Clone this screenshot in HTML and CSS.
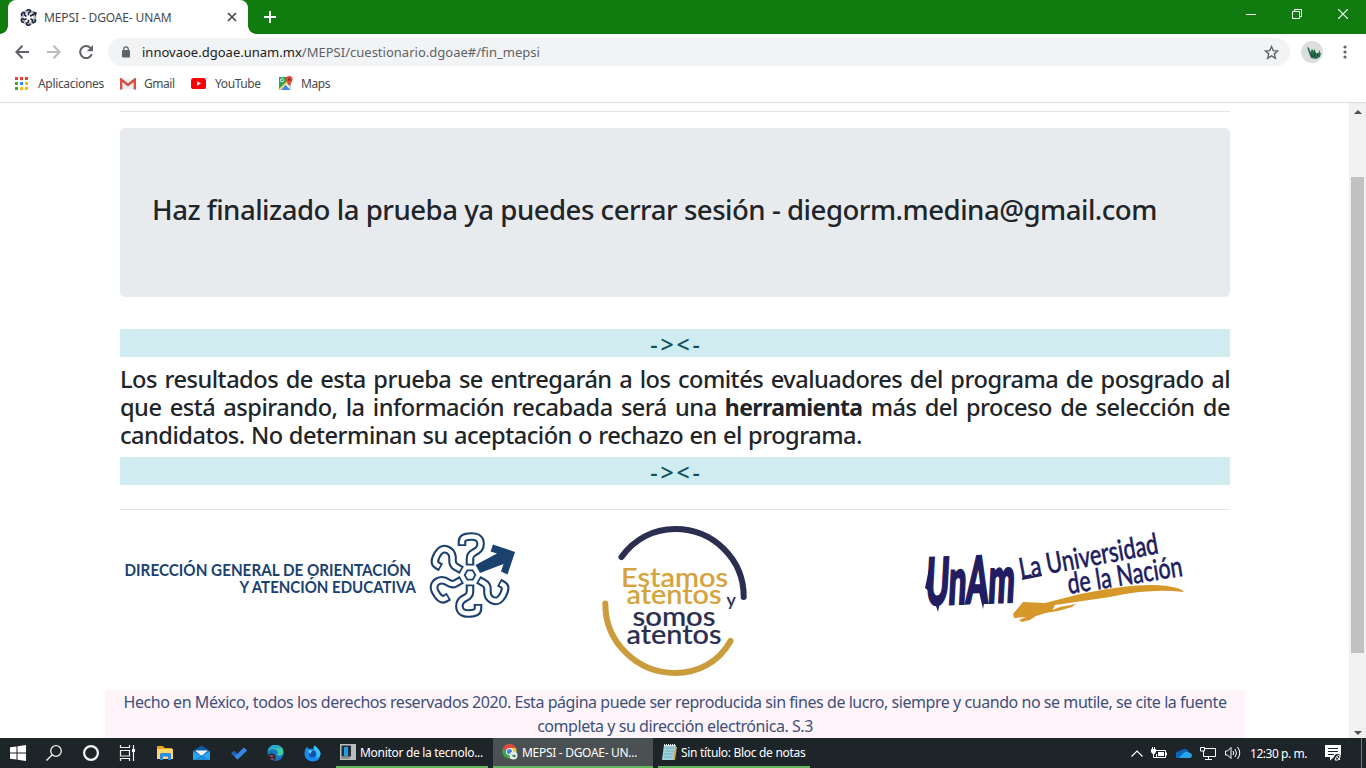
FILE: index.html
```html
<!DOCTYPE html>
<html lang="es">
<head>
<meta charset="utf-8">
<title>MEPSI - DGOAE- UNAM</title>
<link rel="stylesheet" href="styles.css">
</head>
<body>
<div class="screen">
  <header class="tabstrip">
    <div class="tab">
      <svg class="favicon" width="17" height="17" viewBox="0 0 90 90"><g fill="none" stroke="#1d2740" stroke-width="9"><g id="fq"><path d="M45 33V26Q45 21 49 19Q56 16 56 11Q55 4 45 4Q37 4 37 12"/></g><use href="#fq" transform="rotate(-60 45 45)"/><use href="#fq" transform="rotate(-120 45 45)"/><use href="#fq" transform="rotate(180 45 45)"/><use href="#fq" transform="rotate(120 45 45)"/></g><circle cx="45" cy="45" r="34" fill="none" stroke="#1d2740" stroke-opacity=".3" stroke-width="16"/><path d="M51 33L74 22L66 12L90 18L82 42L78 30L55 42Z" fill="#1d2740"/></svg>
      <span class="tab-title">MEPSI - DGOAE- UNAM</span>
      <svg class="tab-close" width="10" height="10" viewBox="0 0 10 10"><path d="M1 1L9 9M9 1L1 9" stroke="#45494d" stroke-width="1.7"/></svg>
    </div>
    <svg class="newtab" width="12" height="12" viewBox="0 0 12 12"><path d="M6 0V12M0 6H12" stroke="#fff" stroke-width="2"/></svg>
    <div class="window-controls">
      <svg width="10" height="10"><path d="M0 5.5H10" stroke="#fff"/></svg>
      <svg width="10" height="10"><path d="M.5 2.5H7.5V9.5H.5ZM2.5 2.5V.5H9.5V7.5H7.5" fill="none" stroke="#fff"/></svg>
      <svg width="10" height="10"><path d="M0 0L10 10M10 0L0 10" stroke="#fff" stroke-width="1.2"/></svg>
    </div>
  </header>
  <nav class="toolbar">
    <svg class="nav-back" width="14" height="14" viewBox="0 0 14 14"><path d="M14 7H1.5M7.5 .8L1.3 7L7.5 13.2" fill="none" stroke="#5f6368" stroke-width="2"/></svg>
    <svg class="nav-forward" width="14" height="14" viewBox="0 0 14 14"><path d="M0 7H12.5M6.5 .8L12.7 7L6.5 13.2" fill="none" stroke="#babcbe" stroke-width="2"/></svg>
    <svg class="nav-reload" width="14" height="14" viewBox="0 0 14 14"><path d="M12.8 9.2A6 6 0 1 1 11.5 2.9L12.3 3.8" fill="none" stroke="#5f6368" stroke-width="2"/><path d="M14 0V6.2H7.8Z" fill="#5f6368"/></svg>
    <div class="omnibox">
      <svg width="8" height="12" viewBox="0 0 8 12"><rect y="4" width="8" height="7.5" rx="1" fill="#5f6368"/><path d="M1.8 4.5V3A2.2 2.2 0 0 1 6.2 3V4.5" fill="none" stroke="#5f6368" stroke-width="1.2"/></svg>
      <span class="url">innovaoe.dgoae.unam.mx<span class="url-path">/MEPSI/cuestionario.dgoae#/fin_mepsi</span></span>
      <svg class="star" width="15" height="15" viewBox="0 0 24 24"><path d="M12 2.5L14.8 9L22 9.6L16.5 14.2L18.2 21.2L12 17.4L5.8 21.2L7.5 14.2L2 9.6L9.2 9Z" fill="none" stroke="#5f6368" stroke-width="2.2"/></svg>
    </div>
    <svg class="avatar" width="22" height="22" viewBox="0 0 22 22"><circle cx="11" cy="11" r="11" fill="#dcdedd"/><path d="M6 6L8 7L9.500 11L11 8L12.500 10L13.500 8L15 12L17 13L18.500 9L19 12L20 12L19 16L15 18L10 17L8 12Z" fill="#28704f"/><path d="M13 12L14 16M10 13L12 16M16 12L17 15" stroke="#15442f" stroke-width="1"/></svg>
    <svg class="kebab" width="4" height="14" viewBox="0 0 4 14"><g fill="#5f6368"><circle cx="2" cy="2" r="1.6"/><circle cx="2" cy="7" r="1.6"/><circle cx="2" cy="12" r="1.6"/></g></svg>
  </nav>
  <nav class="bookmarks">
    <span class="bookmark apps"><svg width="13" height="13" viewBox="0 0 13 13"><path d="M0 0h3v3H0zM5 0h3v3H5zM10 0h3v3h-3z" fill="#ea4335"/><path d="M0 5h3v3H0zM0 10h3v3H0z" fill="#34a853"/><path d="M5 5h3v3H5z" fill="#4285f4"/><path d="M10 5h3v3h-3zM5 10h3v3H5zM10 10h3v3h-3z" fill="#fbbc05"/></svg><span>Aplicaciones</span></span>
    <span class="bookmark gmail"><svg width="16" height="12" viewBox="0 0 16 12"><path d="M0 1H16V11.5H0Z" fill="#f0f0f0"/><path d="M1.2 11.5V1.5L8 7L14.8 1.5V11.5" fill="none" stroke="#d94b3e" stroke-width="2.3"/></svg><span>Gmail</span></span>
    <span class="bookmark youtube"><svg width="15" height="11" viewBox="0 0 15 11"><rect width="15" height="11" rx="2.6" fill="#f00"/><path d="M6 3.2L10 5.5L6 7.8Z" fill="#fff"/></svg><span>YouTube</span></span>
    <span class="bookmark maps"><svg width="15" height="15" viewBox="0 0 15 15"><path d="M1 1H13V14H1Z" fill="#2ba45b"/><path d="M1 14L12 3L13 14Z" fill="#e6e6e6"/><path d="M3 14L7.5 9L12.5 14Z" fill="#4285f4"/><path d="M1 14L13 2" stroke="#ffd04b" stroke-width="1.6"/><circle cx="4" cy="4.2" r="1.6" fill="none" stroke="#d7f0df"/><path d="M11.2 10Q7.9 5.5 7.9 3.3A3.3 3.3 0 0 1 14.5 3.3Q14.5 5.5 11.2 10Z" fill="#df4a3d"/><circle cx="11.2" cy="3.4" r="1.2" fill="#7f2a22"/></svg><span>Maps</span></span>
  </nav>
  <div class="viewport">
    <main class="page">
      <div class="container">
        <hr class="rule">
        <section class="jumbotron"><h3 class="headline">Haz finalizado la prueba ya puedes cerrar sesión - diegorm.medina@gmail.com</h3></section>
        <div class="divider">-&gt;&lt;-</div>
        <h4 class="notice">
          <span class="line">Los resultados de esta prueba se entregarán a los comités evaluadores del programa de posgrado al</span>
          <span class="line">que está aspirando, la información recabada será una <b>herramienta</b> más del proceso de selección de</span>
          <span class="line last">candidatos. No determinan su aceptación o rechazo en el programa.</span>
        </h4>
        <div class="divider">-&gt;&lt;-</div>
        <hr class="rule lower">
        <div class="logos">
          <svg class="logo-dgoae" width="400" height="94" viewBox="120 528 400 94">
            <g class="dgoae-text"><text transform="translate(124.500 575.500) scale(1 1.140)" textLength="286.500" lengthAdjust="spacingAndGlyphs">DIRECCIÓN GENERAL DE ORIENTACIÓN</text><text transform="translate(239.500 592.500) scale(1 1.140)" textLength="176.500" lengthAdjust="spacingAndGlyphs">Y ATENCIÓN EDUCATIVA</text></g>
            <g fill="none">
              <g id="petal"><path d="M470 565.500V558.500Q470 554.500 474 552.500Q480.600 549.500 480.600 544Q480.600 536.500 471.500 536.500Q462 536.500 462 541.500V546" stroke="#1b416f" stroke-width="8.600"/><path d="M470 563.800V558.500Q470 554.500 474 552.500Q480.600 549.500 480.600 544Q480.600 536.500 471.500 536.500Q462 536.500 462 541.500V544.300" stroke="#fff" stroke-width="4.400"/></g>
              <use href="#petal" transform="rotate(-60 470 575)"/><use href="#petal" transform="rotate(-120 470 575)"/><use href="#petal" transform="rotate(180 470 575)"/><use href="#petal" transform="rotate(120 470 575)"/>
              <path d="M467.400 570.400H472.700L475.300 575L472.700 579.600H467.400L464.700 575Z" stroke="#1b416f" stroke-width="1.800"/>
            </g>
            <path d="M475.500 565L497 553.500L490.500 551.500L493 544.500L515 552L507.500 574.500L501 571.500L503.500 564L480 573Z" fill="#1b416f"/>
          </svg>
          <svg class="logo-atentos" width="150" height="154" viewBox="600 524 150 154">
            <g fill="none" stroke-width="6" stroke-linecap="round"><path d="M621.500 557C635 538 655 529 675 529C714 529 744 560 743.700 597" stroke="#2b2e50"/><path d="M605.300 603.500C605 642 637 673 675 673C698 673 719 662 730.500 641" stroke="#cb9c3c"/></g>
            <g class="atentos-text"><text x="621" y="586.500" textLength="107" lengthAdjust="spacingAndGlyphs" class="gold">Estamos</text><text x="626.500" y="603.500" textLength="95" lengthAdjust="spacingAndGlyphs" class="gold">atentos</text><text x="632.500" y="626" textLength="83" lengthAdjust="spacingAndGlyphs">somos</text><text x="626.500" y="643.500" textLength="95" lengthAdjust="spacingAndGlyphs">atentos</text><text x="726.500" y="605.500" class="small">y</text></g>
          </svg>
          <svg class="logo-unam" width="262" height="96" viewBox="923 528 262 96">
            <path d="M1013 614L1023 602L1045 603L1080 594Q1140 582 1167 586Q1182 588 1184 592Q1150 588 1110 597L1055 605L1052 611L1036 616L1030 620L1022 622L1019 620L1026 617L1014 618Z" fill="#d7982b"/><path d="M1045 613L1060 607L1076 604L1072 607L1058 611Z" fill="#d7982b"/>
            <g class="unam-text"><text class="unam-u" transform="translate(925 605) rotate(-2) skewX(-5) scale(1 1.900)" textLength="89" lengthAdjust="spacingAndGlyphs">UnAm</text><text transform="translate(1021 579) rotate(-10.500) scale(1 1.450)" textLength="141" lengthAdjust="spacingAndGlyphs">La Universidad</text><text transform="translate(1069 594) rotate(-9) scale(1 1.450)" textLength="116" lengthAdjust="spacingAndGlyphs">de la Nación</text></g>
            <path d="M1022 579L1042 575" stroke="#211d60" stroke-width="1.800"/>
            <path d="M986 592L983 609L979 592ZM934 600L940 602L938 612ZM930 564L925 588L930 592Z" fill="#211d60"/>
          </svg>
        </div>
      </div>
      <footer class="legal"><p>Hecho en México, todos los derechos reservados 2020. Esta página puede ser reproducida sin fines de lucro, siempre y cuando no se mutile, se cite la fuente</p><p>completa y su dirección electrónica. S.3</p></footer>
    </main>
    <aside class="scrollbar"><i class="arrow up"></i><i class="thumb"></i><i class="arrow down"></i></aside>
  </div>
  <footer class="taskbar">
    <div class="pinned">
      <svg width="16" height="16" viewBox="0 0 16 16"><path d="M0 2.300L6.500 1.400V7.500H0ZM7.500 1.200L16 0V7.500H7.500ZM0 8.500H6.500V14.600L0 13.700ZM7.500 8.500H16V16L7.500 14.800Z" fill="#fff"/></svg>
      <svg width="16" height="16" viewBox="0 0 16 16"><circle cx="10" cy="6" r="5.300" fill="none" stroke="#eee" stroke-width="1.300"/><path d="M6.200 9.800L.5 15.500" stroke="#eee" stroke-width="1.400"/></svg>
      <svg width="16" height="16" viewBox="0 0 16 16"><circle cx="8" cy="8" r="6.900" fill="none" stroke="#f4f4f4" stroke-width="2.200"/></svg>
      <svg width="17" height="16" viewBox="0 0 17 16"><g fill="none" stroke="#eee" stroke-width="1.200"><path d="M1.500 0V2.500H10.500V0M1.500 5.500H10.500V11H1.500ZM1.500 16V13.500H10.500V16M14.500 0V16"/></g><rect x="13" y="4" width="3" height="3" fill="#fff"/></svg>
      <svg width="17" height="16" viewBox="0 0 17 16"><path d="M1 1H7L8.500 3H16V14H1Z" fill="#e9a91f"/><path d="M1 4H17V14H1Z" fill="#ffd66b"/><path d="M4 15V9.500Q4 8 5.500 8H13.500Q15 8 15 9.500V15H12V11.500H7V15Z" fill="#2b8de0"/></svg>
      <svg width="17" height="16" viewBox="0 0 17 16"><path d="M0 6L8.500 .5L17 6V15H0Z" fill="#0b5ca8"/><path d="M2 5.500H15L8.500 11Z" fill="#f2f5f8"/><path d="M0 6L8.500 11L17 6V15H0Z" fill="#2aa5ee"/><path d="M0 15L9 10L17 15Z" fill="#1e8ddc"/></svg>
      <svg width="16" height="16" viewBox="0 0 16 16"><path d="M0 8.500L3 5.500L6.500 9L13 2.500L16 5.500L6.500 14.500Z" fill="#1d62bd"/><path d="M3.500 11.500L13 2.500L16 5.500L6.500 14.500Z" fill="#3785e0"/></svg>
      <svg width="17" height="17" viewBox="0 0 17 17"><circle cx="8.500" cy="8" r="8" fill="#1777c4"/><path d="M.6 7Q2-.3 9 0Q17 1 16.500 8Q15 12 10 10Q12 5 7 4Q2 4 .6 7Z" fill="#3ccca0"/><path d="M.6 6Q2-.3 9 0Q13 1 14 4Q7 1 .6 6Z" fill="#25a6d6"/><circle cx="4.500" cy="12.500" r="4" fill="#33252b"/><path d="M3 11H6M4 14H7" stroke="#b28080"/></svg>
      <svg width="17" height="17" viewBox="0 0 17 17"><path d="M3 2L5 4Q8 3 9 4L10 .5Q16 4 16.500 9Q16 16.500 8.500 16.500Q1 16 .5 9Q.5 4 3 2Z" fill="#188cf0"/><path d="M10 .5Q16 4 16.500 9Q15 13 12 13Q14 7 10 5Z" fill="#39c5fb"/><circle cx="8.500" cy="9" r="3.500" fill="#134fac"/><path d="M4 5L8 6L6 9Z" fill="#7de0ff"/></svg>
    </div>
    <div class="task monitor"><svg width="16" height="16" viewBox="0 0 16 16"><path d="M0 0H16V16H0Z" fill="#b9bec0"/><path d="M1.500 1.500H11V12.500H1.500Z" fill="#202f38"/><path d="M4 3H8V12H4Z" fill="#249edc"/><path d="M1 14H10" stroke="#666"/></svg><span>Monitor de la tecnolo...</span></div>
    <div class="task active"><svg width="16" height="16" viewBox="0 0 16 16"><circle cx="7.500" cy="7.500" r="7.200" fill="#39a852"/><path d="M1.200 4A7.200 7.200 0 0 1 14 4H7.500L4.500 9Z" fill="#df4b3f"/><path d="M7.500 4H14Q15.500 10 11 13.700L8 14.700L10.700 9Z" fill="#f6c534"/><circle cx="7.500" cy="7.500" r="3.500" fill="#fff"/><circle cx="7.500" cy="7.500" r="2.600" fill="#4081e8"/><circle cx="11.500" cy="11.500" r="4" fill="#e5eae6"/><path d="M9.500 10.500L11.500 11.500L13 10.500L13.500 13H11.500Z" fill="#286148"/></svg><span>MEPSI - DGOAE- UN...</span></div>
    <div class="task notepad"><svg width="15" height="16" viewBox="0 0 15 16"><path d="M2 1H14L12 16H0Z" fill="#9ed2dc"/><path d="M13 3L15 3L13 16H11Z" fill="#d5a84d"/><path d="M3 4H12M3 7H12M2 10H11M2 13H10" stroke="#5fa2b2" stroke-width=".7"/><path d="M2 1H14" stroke="#eee" stroke-width="2" stroke-dasharray="1 1"/></svg><span>Sin título: Bloc de notas</span></div>
    <div class="tray">
      <svg width="12" height="7" viewBox="0 0 12 7"><path d="M.5 6.500L6 1L11.500 6.500" fill="none" stroke="#fff" stroke-width="1.200"/></svg>
      <svg width="16" height="12" viewBox="0 0 16 12"><path d="M4.500 3.500H14.500V10.500H5.500V7" fill="none" stroke="#fff"/><path d="M7 5H13V9H7ZM15 5.500H16V8.500H15ZM0 2H5V5L3.500 7H1.500L0 5ZM1 0H2V2H1ZM3 0H4V2H3Z" fill="#fff"/><path d="M2.500 7V10.500H6" fill="none" stroke="#fff"/></svg>
      <svg width="16" height="10" viewBox="0 0 16 10"><path d="M3 10A3 3 0 0 1 1.500 4Q3 2 5 2.500A4.500 4.500 0 0 1 12.500 3.500L6 10Z" fill="#0c66ba"/><path d="M3 10L8 4.500Q11 3 13 4.500Q16 5 16 8Q15.500 10 13.500 10Z" fill="#28a4ec"/></svg>
      <svg width="16" height="14" viewBox="0 0 16 14"><path d="M5 2.500H15.500V10.500H3.500V5M8.500 10.500V13.500M5 13.500H12" fill="none" stroke="#fff"/><path d="M.5 1.500H4.500V5H.5Z" fill="none" stroke="#fff"/></svg>
      <svg width="17" height="14" viewBox="0 0 17 14"><path d="M.5 5H2.500L6 1.500V12.500L2.500 9H.5Z" fill="none" stroke="#fff"/><path d="M8 5Q9.500 7 8 9M10 3Q13 7 10 11M12.500 1Q17 7 12.500 13" fill="none" stroke="#fff"/></svg>
      <span class="clock">12:30 p. m.</span>
      <svg class="action" width="17" height="17" viewBox="0 0 17 17"><path d="M0 0H16V12H9L5 15.500V12H0Z" fill="#fff"/><path d="M3 3.500H13M3 6.500H13M3 9.500H9" stroke="#20272b"/><circle cx="12.500" cy="12.500" r="3.500" fill="#20272b"/><path d="M10 15Q12 9 15 11Q15 16 10 15ZM12 12L15 15" fill="none" stroke="#fff"/></svg>
      <i class="show-desktop"></i>
    </div>
  </footer>
</div>
</body>
</html>
```
FILE: styles.css
```css
* { box-sizing: border-box; }
body { margin: 0; overflow: hidden; font-family: "Noto Sans", sans-serif; }
svg { display: block; flex: none; }
h3, h4, p { margin: 0; }
.screen { width: 1366px; height: 768px; display: flex; flex-direction: column; background: #fff; overflow: hidden; }
.tabstrip { height: 34px; flex: none; display: flex; background: #107c10; }
.tab { position: relative; width: 240px; margin-left: 8px; background: #fff; border-radius: 8px 8px 0 0; display: flex; align-items: center; padding: 0 11px 0 12px; }
.tab::before, .tab::after { content: ""; position: absolute; bottom: 0; width: 8px; height: 8px; }
.tab::before { left: -8px; background: radial-gradient(circle at 0 0, transparent 7.5px, #fff 8px); }
.tab::after { right: -8px; background: radial-gradient(circle at 100% 0, transparent 7.5px, #fff 8px); }
.tab-title { margin-left: 7px; font-size: 12px; letter-spacing: -.13px; color: #45494d; white-space: nowrap; flex: 1; }
.newtab { margin: 11px 0 0 16px; }
.window-controls { margin: 9px 18px 0 auto; display: flex; gap: 36px; }
.toolbar { height: 36px; flex: none; background: #fff; display: flex; align-items: center; padding-left: 15px; }
.nav-forward { margin-left: 18px; }
.nav-reload { margin-left: 18px; }
.omnibox { width: 1182px; height: 28px; border-radius: 14px; background: #f1f3f4; margin-left: 15px; padding: 0 11px 0 14px; display: flex; align-items: center; }
.url { margin-left: 12px; font-size: 13px; letter-spacing: .01px; color: #202124; flex: 1; }
.url-path { color: #5f6368; }
.avatar { margin-left: 11px; }
.kebab { margin-left: 20px; }
.bookmarks { height: 33px; flex: none; display: flex; background: #fff; padding: 0 0 5px 15px; border-bottom: 1px solid #dadce0; font-size: 12px; color: #45494d; }
.bookmark { display: flex; align-items: center; white-space: nowrap; }
.apps { width: 105px; gap: 10px; letter-spacing: -.33px; }
.gmail { width: 71px; gap: 8px; letter-spacing: -.45px; }
.youtube { width: 87px; gap: 9px; letter-spacing: -.4px; }
.maps { gap: 8px; letter-spacing: -.45px; }
.viewport { flex: 1; min-height: 0; display: flex; }
.page { width: 1349px; overflow: hidden; padding: 8px 104px 0 105px; }
.container { padding: 0 15px; }
.rule { height: 1px; border: 0; margin: 0 0 16px; background: #e5e5e5; }
.jumbotron { height: 169px; border-radius: 5px; background: #e8ebee; padding: 64px 32px 0; color: #212529; }
.headline { font-size: 27.6px; font-weight: 500; line-height: 34px; letter-spacing: -.51px; word-spacing: .1px; white-space: nowrap; }
.divider { height: 28px; margin-top: 32px; background: #d1ecf1; text-align: center; font-size: 23px; line-height: 30px; letter-spacing: 2.8px; text-indent: 3px; color: #0c5460; font-weight: 500; }
.notice { margin-top: 8px; height: 92px; color: #212529; font-size: 23.6px; font-weight: 500; line-height: 28px; letter-spacing: -.51px; word-spacing: .6px; }
.notice + .divider { margin-top: 0; }
.line { display: block; text-align: justify; text-align-last: justify; white-space: nowrap; }
.notice b { font-size: 23px; letter-spacing: -.6px; }
.last { text-align-last: left; }
.lower { margin: 24px 0 14px; }
.logos { display: flex; align-items: flex-start; height: 166px; padding-top: 4px; }
.logo-atentos { margin: -4px 0 0 80px; }
.logo-unam { margin-left: 173px; }
.dgoae-text { font: bold 15px Lato, sans-serif; fill: #1b416f; }
.atentos-text { font: 500 27.5px Lato, sans-serif; fill: #2b2e50; stroke: #2b2e50; stroke-width: .2px; }
.gold { fill: #d5a23b; stroke: #d5a23b; }
.small { font-size: 18px; }
.unam-text { font: 500 20px Lato, sans-serif; fill: #211d60; stroke: #211d60; stroke-width: .3px; }
.unam-u { font-size: 34px; font-weight: 900; stroke-width: 1.3px; }
.legal { height: 60px; background: #fff4fa; text-align: center; font-size: 16px; line-height: 24px; color: #3c5079; white-space: nowrap; letter-spacing: -.45px; }
.scrollbar { width: 17px; background: #f1f1f1; display: flex; flex-direction: column; align-items: center; padding: 7px 0 3px; }
.arrow { border: 4px solid transparent; }
.up { border-top: 0; border-bottom-color: #505050; }
.down { border-bottom: 0; border-top-color: #505050; margin-top: auto; }
.thumb { width: 13px; height: 476px; background: #c1c1c1; margin-top: 63px; }
.taskbar { height: 30px; flex: none; background: #1e2529; color: #fff; display: flex; font-size: 12px; }
.pinned { width: 336px; display: flex; align-items: center; padding-left: 10px; gap: 20.3px; }
.task { display: flex; align-items: center; gap: 4px; white-space: nowrap; width: 152px; padding-left: 4px; border-bottom: 2px solid #62b85e; letter-spacing: -.3px; }
.active { width: 160px; margin: 0 5px; padding-left: 9px; background: #4b5053; }
.tray { margin-left: auto; display: flex; align-items: center; gap: 8.5px; }
.clock { width: 59px; letter-spacing: -.45px; white-space: nowrap; }
.action { margin-left: 7px; }
.show-desktop { width: 1px; height: 30px; background: #72777a; margin: 0 4px 0 11px; }
```
